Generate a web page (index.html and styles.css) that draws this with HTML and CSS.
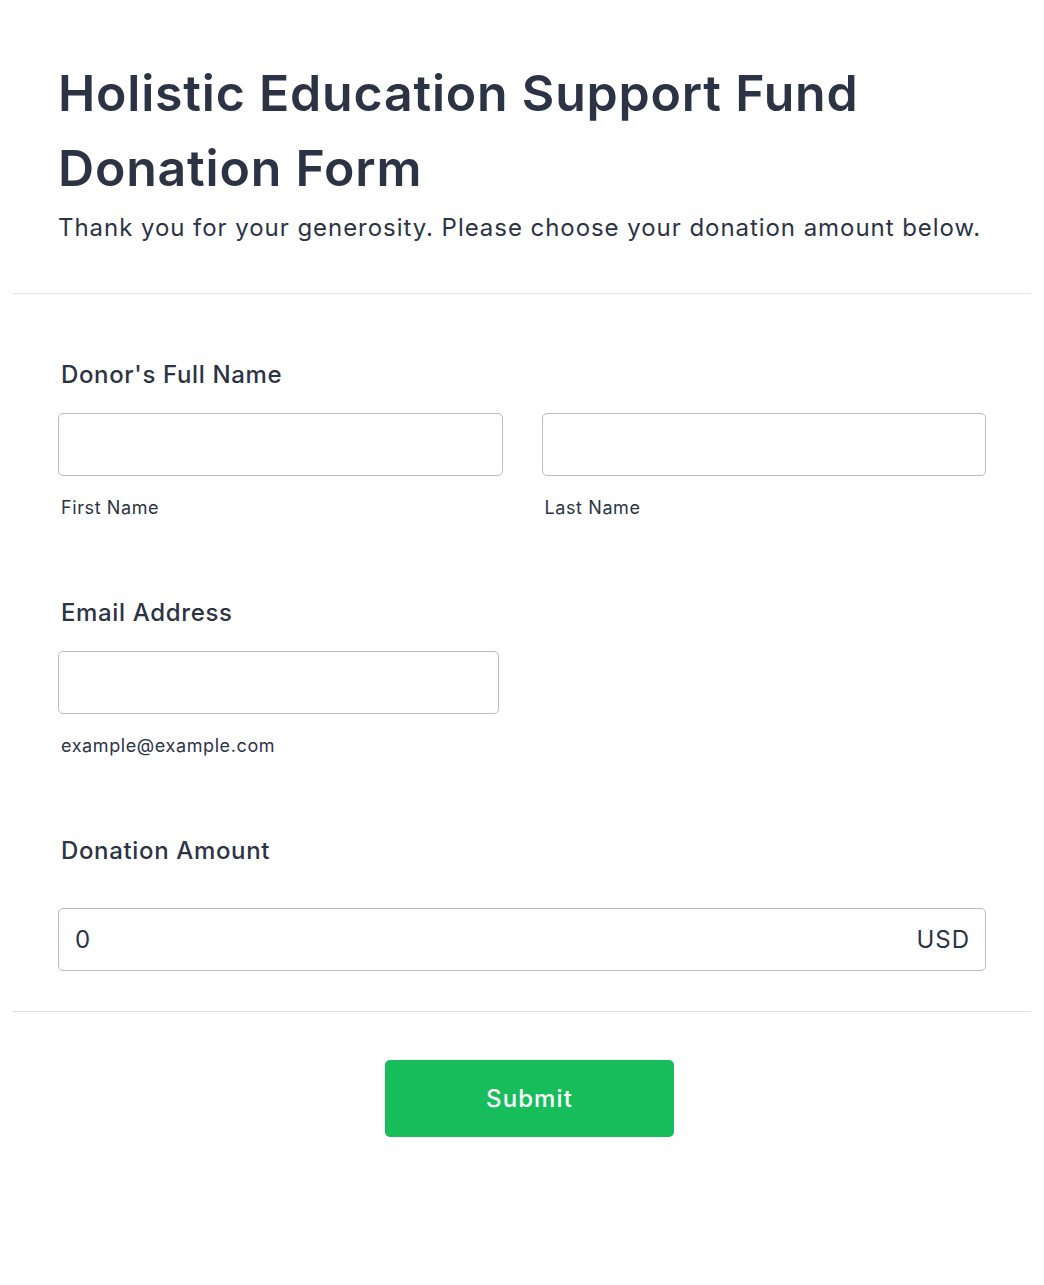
FILE: index.html
```html
<!DOCTYPE html>
<html lang="en">
	<head>
		<meta charset="UTF-8" />
		<meta name="viewport" content="width=device-width, initial-scale=1.0" />
		<title>Holistic Education Support Fund Donation Form</title>
		<link rel="stylesheet" href="styles.css">
	</head>
	<body>
		<form class="form">
			<div class="form-header">
				<h1>Holistic Education Support Fund Donation Form</h1>
				<p class="subtitle">Thank you for your generosity. Please choose your donation amount below.</p>
			</div>

			<div class="form-body">
				<div class="field">
					<label class="field-label">Donor's Full Name</label>
					<div class="name-row">
						<div class="sub-field">
							<input type="text" id="firstName" />
							<label class="sub-label" for="firstName">First Name</label>
						</div>
						<div class="sub-field">
							<input type="text" id="lastName" />
							<label class="sub-label" for="lastName">Last Name</label>
						</div>
					</div>
				</div>

				<div class="field">
					<label class="field-label" for="email">Email Address</label>
					<div class="sub-field email">
						<input type="email" id="email" />
						<label class="sub-label" for="email">example@example.com</label>
					</div>
				</div>

				<div class="field amount-field">
					<label class="field-label" for="amount">Donation Amount</label>
					<div class="amount-box">
						<input type="text" id="amount" value="0" />
						<span class="currency">USD</span>
					</div>
				</div>
			</div>

			<div class="form-footer">
				<button type="submit">Submit</button>
			</div>
		</form>
	</body>
</html>
```

FILE: styles.css
```css
:root {
	--text: #2c3345;
	--border: #b8bdc9;
	--line: #e0e1e6;
	--green: #18bd5b;
}

* {
	box-sizing: border-box;
}

body {
	margin: 0;
	font-family: Inter, 'Noto Sans', sans-serif;
	color: var(--text);
	background: #fff;
}

.form {
	margin: 0 13px;
}

.form-header {
	padding: 56px 45px 47px;
	border-bottom: 1px solid var(--line);
}

h1 {
	margin: 0;
	font-size: 50px;
	line-height: 75px;
	font-weight: 600;
	letter-spacing: 0.8px;
}

.subtitle {
	margin: 4px 0 0;
	font-size: 24px;
	line-height: 36px;
	letter-spacing: 0.95px;
}

.form-body {
	padding: 63px 45px 40px;
	border-bottom: 1px solid var(--line);
}

.field + .field {
	margin-top: 74px;
}

.field-label {
	display: block;
	padding-left: 3px;
	font-size: 24px;
	line-height: 36px;
	font-weight: 500;
	letter-spacing: 0.65px;
	margin-bottom: 20px;
}

.name-row {
	display: flex;
	gap: 39px;
}

.sub-field {
	flex: 1;
	display: flex;
	flex-direction: column;
}

.sub-field.email {
	width: 441px;
}

input {
	width: 100%;
	height: 63px;
	border: 1px solid var(--border);
	border-radius: 5px;
	padding: 0 16px;
	font-family: inherit;
	font-size: 24px;
	letter-spacing: 1px;
	color: var(--text);
	background: #fff;
}

.sub-label {
	padding-left: 3px;
	margin-top: 18px;
	font-size: 18px;
	line-height: 27px;
	letter-spacing: 0.6px;
}

.amount-field .field-label {
	margin-bottom: 39px;
}

.amount-box {
	position: relative;
}

.currency {
	position: absolute;
	right: 16px;
	top: 0;
	line-height: 63px;
	font-size: 24px;
	letter-spacing: 1px;
}

.form-footer {
	display: flex;
	justify-content: center;
	padding: 48px 0 0 15px;
}

button {
	width: 289px;
	height: 77px;
	border: none;
	border-radius: 5px;
	background: var(--green);
	color: #fff;
	font-family: inherit;
	font-size: 24px;
	font-weight: 500;
	letter-spacing: 1.1px;
	cursor: pointer;
}
```
